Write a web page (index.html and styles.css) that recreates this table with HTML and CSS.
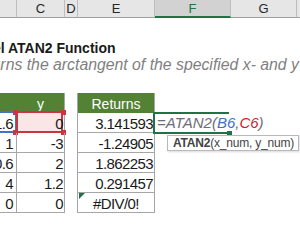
FILE: index.html
```html
<!DOCTYPE html>
<html>
<head>
<meta charset="utf-8">
<link rel="stylesheet" href="styles.css">
</head>
<body>
<div class="sheet">
  <div class="colhead">
    <div class="ch"></div>
    <div class="ch">C</div>
    <div class="ch">D</div>
    <div class="ch">E</div>
    <div class="ch sel">F</div>
    <div class="ch">G</div>
    <div class="ch last"></div>
  </div>

  <div class="title">Excel ATAN2 Function</div>
  <div class="subtitle">Returns the arctangent of the specified x- and y-coordinates.</div>

  <div class="table">
    <div class="th b"></div>
    <div class="th c">y</div>
    <div class="sp"></div>
    <div class="th e">Returns</div>
    <div class="sp"></div><div class="sp"></div><div class="sp"></div>

    <div class="td b"><span class="selb"></span>-1.6</div>
    <div class="td c"><span class="selr"><i class="h tl"></i><i class="h tr"></i><i class="h bl"></i><i class="h br"></i></span><span class="v">0</span></div>
    <div class="sp"></div>
    <div class="td e">3.141593</div>
    <div class="sp f6">
      <div class="editor"><span class="fg">=ATAN2(</span><span class="rb">B6</span><span class="fg">,</span><span class="rr">C6</span><span class="fg">)</span><i class="fill"></i></div>
      <div class="tip"><b>ATAN2</b>(x_num, y_num)</div>
    </div>
    <div class="sp"></div><div class="sp"></div>

    <div class="td b">1</div>
    <div class="td c">-3</div>
    <div class="sp"></div>
    <div class="td e">-1.24905</div>
    <div class="sp"></div><div class="sp"></div><div class="sp"></div>

    <div class="td b">-0.6</div>
    <div class="td c">2</div>
    <div class="sp"></div>
    <div class="td e">1.862253</div>
    <div class="sp"></div><div class="sp"></div><div class="sp"></div>

    <div class="td b">4</div>
    <div class="td c">1.2</div>
    <div class="sp"></div>
    <div class="td e">0.291457</div>
    <div class="sp"></div><div class="sp"></div><div class="sp"></div>

    <div class="td b">0</div>
    <div class="td c">0</div>
    <div class="sp"></div>
    <div class="td e err"><i class="tri"></i>#DIV/0!</div>
    <div class="sp"></div><div class="sp"></div><div class="sp"></div>
  </div>
</div>
</body>
</html>
```

FILE: styles.css
```css
html, body {
  margin: 0;
  padding: 0;
  background: #ffffff;
}
body {
  width: 300px;
  height: 246px;
  overflow: hidden;
  font-family: "Liberation Sans", Arial, sans-serif;
}
.sheet {
  width: 300px;
  height: 246px;
  overflow: hidden;
}

/* column header bar */
.colhead {
  display: grid;
  grid-template-columns: 17px 48px 13px 77px 76px 66px 3px;
  height: 18px;
  background: #e6e6e6;
}
.ch {
  box-sizing: border-box;
  height: 18px;
  border-right: 1px solid #bdbdbd;
  border-bottom: 1px solid #9e9e9e;
  display: flex;
  align-items: center;
  justify-content: center;
  font-size: 13px;
  line-height: 14px;
  color: #262626;
  padding-top: 1px;
}
.ch.sel {
  background: #d2d2d2;
  color: #217346;
  border-bottom: 2px solid #217346;
}
.ch.last {
  border-right: none;
}

/* titles */
.title {
  margin: 22px 0 0 -32px;
  font-weight: bold;
  font-size: 14px;
  line-height: 16px;
  color: #1a1a1a;
  white-space: nowrap;
}
.subtitle {
  margin: 1px 0 0 -33px;
  font-style: italic;
  font-size: 15.8px;
  line-height: 16px;
  color: #7f7f7f;
  white-space: nowrap;
}

/* table grid */
.table {
  margin-top: 20px;
  display: grid;
  grid-template-columns: 17px 48px 12px 78px 76px 66px 3px;
  grid-auto-rows: 20px;
}
.th {
  box-sizing: border-box;
  background: #548235;
  color: #ffffff;
  font-size: 14px;
  line-height: 17px;
  padding-top: 3px;
  text-align: center;
  white-space: nowrap;
}
.th.c { border-right: 1px solid #a6a6a6; }
.th.e { border-left: 1px solid #a6a6a6; border-right: 1px solid #a6a6a6; }

.td {
  position: relative;
  box-sizing: border-box;
  display: flex;
  align-items: flex-end;
  justify-content: flex-end;
  border-bottom: 1px solid #a6a6a6;
  font-size: 15px;
  line-height: 16px;
  letter-spacing: -0.6px;
  color: #1a1a1a;
  padding-right: 2px;
  white-space: nowrap;
}
.td.b { border-right: 1px solid #a6a6a6; padding-right: 3px; }
.td.c { border-right: 1px solid #a6a6a6; padding-right: 1px; }
.td.e { border-left: 1px solid #a6a6a6; border-right: 1px solid #a6a6a6; padding-right: 1px; }
.td.err { justify-content: center; padding-right: 0; }
.td .v { position: relative; }
.sp { position: relative; }

/* selection overlays */
.selb {
  position: absolute;
  left: -20px;
  right: -1px;
  top: -2px;
  bottom: -1px;
  border: 2px solid #4472c4;
}
.selr {
  position: absolute;
  left: -1px;
  right: 1px;
  top: -2px;
  bottom: -1px;
  border: 2px solid #c8373f;
  background: #fbe6e7;
}
.h {
  position: absolute;
  width: 5px;
  height: 5px;
  background: #c8373f;
}
.h.tl { left: -5px; top: -3px; }
.h.tr { right: -5px; top: -3px; }
.h.bl { left: -5px; bottom: -4px; }
.h.br { right: -5px; bottom: -4px; }

/* error indicator */
.tri {
  position: absolute;
  left: 1px;
  top: 0;
  width: 0;
  height: 0;
  border-top: 6px solid #1e7145;
  border-right: 6px solid transparent;
}

/* formula cell in edit mode */
.editor {
  position: absolute;
  left: -2px;
  top: -1px;
  width: 76px;
  height: 22px;
  box-sizing: border-box;
  border-top: 2px solid #217346;
  border-left: 2px solid #217346;
  border-bottom: 2px solid #217346;
  padding: 1px 0 0 2px;
  font-style: italic;
  font-size: 15px;
  line-height: 16px;
  white-space: nowrap;
  z-index: 2;
}
.fg { color: #6d6d78; }
.rb { color: #3f6fc6; }
.rr { color: #c8262e; }
.fill {
  position: absolute;
  left: 72px;
  top: 17px;
  width: 5px;
  height: 5px;
  background: #217346;
}
.tip {
  position: absolute;
  left: 12px;
  top: 22px;
  width: 132px;
  height: 16px;
  box-sizing: border-box;
  border: 1px solid #b9b9b9;
  background: #ffffff;
  box-shadow: 1px 1px 2px rgba(0, 0, 0, 0.15);
  font-size: 12px;
  line-height: 14px;
  letter-spacing: -0.2px;
  color: #444444;
  padding-left: 5px;
  white-space: nowrap;
  z-index: 3;
}
.tip b { font-weight: bold; }
```
